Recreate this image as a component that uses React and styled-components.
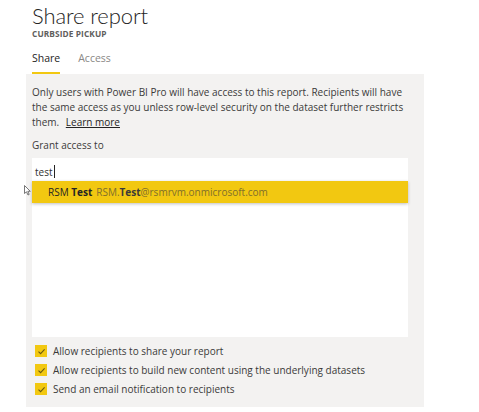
import React from "react";
import styled, { createGlobalStyle } from "styled-components";

const Global = createGlobalStyle`
  html, body { margin: 0; padding: 0; background: #ffffff; }
  body { font-family: "Segoe UI", "Open Sans", "Noto Sans", sans-serif; color: #323130; }
  * { box-sizing: border-box; }
`;

const Page = styled.div`
  width: 479px;
  height: 412px;
  overflow: hidden;
  position: relative;
`;

const Header = styled.div`
  padding: 2px 0 0 32px;
`;

const Title = styled.h1`
  margin: 0;
  font-family: "Lato", "Open Sans", sans-serif;
  font-weight: 300;
  font-size: 22px;
  line-height: 28px;
  color: #252423;
  letter-spacing: -0.1px;
`;

const Subtitle = styled.div`
  font-size: 8.3px;
  font-weight: 700;
  letter-spacing: 0.1px;
  color: #605e5c;
  line-height: 10px;
  margin-top: -1px;
`;

const Tabs = styled.div`
  display: flex;
  gap: 18px;
  margin-top: 12px;
`;

const Tab = styled.div`
  font-size: 10.5px;
  line-height: 14px;
  padding-bottom: 7px;
  color: ${(p) => (p.$active ? "#252423" : "#8a8886")};
  border-bottom: 2px solid ${(p) => (p.$active ? "#F2C811" : "transparent")};
`;

const Panel = styled.div`
  margin-left: 26px;
  width: 398px;
  height: 333px;
  background: #f3f2f1;
  padding: 11px 16px 0 6px;
`;

const Para = styled.p`
  margin: 0;
  font-size: 10px;
  line-height: 15px;
  color: #3b3a39;
`;

const Link = styled.a`
  color: #252423;
  text-decoration: underline;
  margin-left: 4px;
`;

const Label = styled.div`
  margin-top: 8px;
  font-size: 10px;
  line-height: 14px;
  color: #3b3a39;
`;

const PickerBox = styled.div`
  position: relative;
  margin-top: 6px;
  height: 179px;
  background: #ffffff;
`;

const Input = styled.div`
  height: 23px;
  padding: 4px 0 0 3px;
  font-size: 10px;
  line-height: 14px;
  color: #323130;
  display: flex;
  align-items: center;
`;

const Caret = styled.span`
  display: inline-block;
  width: 1px;
  height: 13px;
  background: #252423;
  margin-left: 1px;
`;

const Suggestion = styled.div`
  position: absolute;
  left: 0;
  right: 0;
  top: 23px;
  height: 22px;
  background: #f2c811;
  box-shadow: 0 1px 3px rgba(0, 0, 0, 0.25);
  display: flex;
  align-items: center;
  padding-left: 16px;
  font-size: 10px;
  white-space: nowrap;
`;

const Name = styled.span`
  color: #252423;
  margin-right: 4px;
  & b { font-weight: 700; }
`;

const Email = styled.span`
  color: #7f6f2c;
  & b { font-weight: 700; color: #3b3a39; }
`;

const Pointer = styled.svg`
  position: absolute;
  left: -8px;
  top: 4px;
`;

const Options = styled.div`
  display: flex;
  flex-direction: column;
  gap: 7px;
  margin-top: 8px;
  padding-left: 3px;
`;

const Option = styled.label`
  display: flex;
  align-items: center;
  gap: 6px;
  font-size: 10px;
  line-height: 12px;
  color: #3b3a39;
`;

const Box = styled.span`
  width: 12px;
  height: 12px;
  background: #f2c811;
  display: inline-flex;
  align-items: center;
  justify-content: center;
  flex: none;
`;

const Check = () => (
  <Box>
    <svg width="9" height="9" viewBox="0 0 9 9">
      <path d="M1.5 4.6 L3.6 6.6 L7.6 2.4" fill="none" stroke="#6b5a10" strokeWidth="1.1" />
    </svg>
  </Box>
);

export default function App() {
  return (
    <Page>
      <Global />
      <Header>
        <Title>Share report</Title>
        <Subtitle>CURBSIDE PICKUP</Subtitle>
        <Tabs>
          <Tab $active>Share</Tab>
          <Tab>Access</Tab>
        </Tabs>
      </Header>
      <Panel>
        <Para>
          Only users with Power BI Pro will have access to this report. Recipients will have
          the same access as you unless row-level security on the dataset further restricts
          them. <Link>Learn more</Link>
        </Para>
        <Label>Grant access to</Label>
        <PickerBox>
          <Input>
            test<Caret />
          </Input>
          <Suggestion>
            <Pointer width="7" height="11" viewBox="0 0 7 11">
              <path d="M0.5 0.5 L0.5 8.5 L2.5 6.8 L4 10 L5.2 9.4 L3.8 6.3 L6.3 6.3 Z" fill="#fff" stroke="#555" strokeWidth="0.8" />
            </Pointer>
            <Name>RSM <b>Test</b></Name>
            <Email>RSM.<b>Test</b>@rsmrvm.onmicrosoft.com</Email>
          </Suggestion>
        </PickerBox>
        <Options>
          <Option><Check />Allow recipients to share your report</Option>
          <Option><Check />Allow recipients to build new content using the underlying datasets</Option>
          <Option><Check />Send an email notification to recipients</Option>
        </Options>
      </Panel>
    </Page>
  );
}
